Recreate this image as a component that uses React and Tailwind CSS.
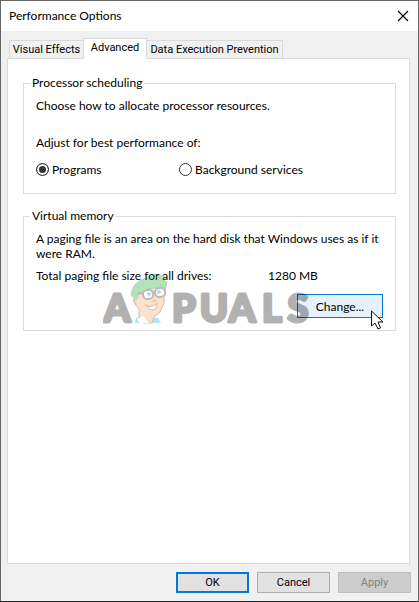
import { useState } from 'react';

const TABS = [
  { name: 'Visual Effects', width: 'w-[75px]' },
  { name: 'Advanced', width: 'w-16' },
  { name: 'Data Execution Prevention', width: 'w-[137px]' },
];

function TitleBar() {
  return (
    <header className="flex h-[30px] items-center justify-between bg-white pl-2 pr-[9px]">
      <h1 className="text-[12px] leading-4">Performance Options</h1>
      <button aria-label="Close" className="flex h-4 w-3 items-center justify-center">
        <svg width="12" height="12" viewBox="0 0 12 12" fill="none" stroke="#000" strokeWidth="1.1">
          <path d="M1 1L11 11M11 1L1 11" />
        </svg>
      </button>
    </header>
  );
}

function Tabs({ active, onSelect }) {
  return (
    <div role="tablist" className="relative z-10 -mb-px flex items-end pl-0.5 font-['Roboto',sans-serif]">
      {TABS.map((tab) => (
        <button
          key={tab.name}
          role="tab"
          aria-selected={active === tab.name}
          onClick={() => onSelect(tab.name)}
          className={`${tab.width} -mr-px flex justify-center whitespace-nowrap border border-[#d9d9d9] text-[11px] leading-4 ${
            active === tab.name ? 'z-10 h-[21px] border-b-0 bg-white pt-px' : 'h-[19px] bg-[#f0f0f0] pt-px'
          }`}
        >
          {tab.name}
        </button>
      ))}
    </div>
  );
}

function Group({ title, children }) {
  return (
    <fieldset className="min-w-0 border border-[#dcdcdc] pl-3 pr-3">
      <legend className="-ml-1.5 px-0.5 text-[12px] leading-4">{title}</legend>
      {children}
    </fieldset>
  );
}

function Radio({ label, checked, onChange }) {
  return (
    <label className="flex items-center gap-[3px]">
      <input
        type="radio"
        name="scheduling"
        checked={checked}
        onChange={onChange}
        className="h-[13px] w-[13px] appearance-none rounded-full border border-[#333] bg-white checked:bg-[#333] checked:shadow-[inset_0_0_0_2px_#fff]"
      />
      {label}
    </label>
  );
}

function Watermark() {
  return (
    <svg
      aria-hidden="true"
      className="pointer-events-none absolute -top-2.5 left-[67px] opacity-30"
      width="210"
      height="64"
      viewBox="0 0 210 64"
    >
      <g
        className="font-['Lato','Open_Sans',sans-serif] text-[38px] font-black"
        stroke="#000"
        strokeWidth="3"
        strokeLinejoin="round"
        textAnchor="middle"
      >
        <text x="14" y="48">A</text>
        <text x="81" y="48">P</text>
        <text x="111" y="48">U</text>
        <text x="139" y="48">A</text>
        <text x="169" y="48">L</text>
        <text x="195" y="48">S</text>
      </g>
      <g strokeLinejoin="round" strokeLinecap="round">
        <path d="M32 49L33 44L38 42L55 44L58 49Z" fill="#1aa5d5" />
        <path d="M35 19L31 26L32 30L36 35L36 43L40 49H49L51 43L57 38L61 29L61 15L50 13Z" fill="#f3a04e" stroke="#50301c" />
        <path d="M29 22C27 15 33 7 43 4L51 1C55 0 60 1 63 4L61 7L64 8L62 16C52 12 43 14 36 20L33 26Z" fill="#06a016" stroke="#145a21" />
        <path d="M34 45L37 49H46L40 42Z" fill="#fff" />
        <g fill="#fff" stroke="#222" strokeWidth="2">
          <rect x="40" y="16" width="10" height="9" rx="4" transform="rotate(-8 45 20)" />
          <rect x="52" y="14" width="10" height="9" rx="4" transform="rotate(-8 57 18)" />
          <path d="M50 19L52 18M40 20L35 19" fill="none" />
        </g>
        <circle cx="46" cy="20" r="2" fill="#1788bc" />
        <circle cx="56" cy="18" r="2" fill="#1788bc" />
        <path d="M43 31C47 34 52 32 54 29C54 35 49 40 43 31Z" fill="#fff" stroke="#3d2716" />
        <path d="M51 25L53 27H50M30 26L33 31" fill="none" stroke="#50301c" />
      </g>
    </svg>
  );
}

function Cursor() {
  return (
    <svg aria-hidden="true" className="absolute left-[74px] top-4" width="13" height="20" viewBox="0 0 13 20">
      <path d="M.5 1V16L4 13L7 19L9.5 18L7 12H12Z" fill="#fff" stroke="#111" />
    </svg>
  );
}

export default function App() {
  const [tab, setTab] = useState('Advanced');
  const [mode, setMode] = useState('Programs');

  return (
    <main className="flex min-h-screen flex-col border border-[#666] border-b-[#222] bg-[#f0f0f0] font-['Lato','Noto_Sans',sans-serif] text-[12px] leading-[15px] text-black">
      <TitleBar />
      <div className="flex grow flex-col pb-[38px] pl-1.5 pr-2 pt-[7px]">
        <Tabs active={tab} onSelect={setTab} />
        <section role="tabpanel" className="flex grow flex-col gap-[14px] border border-[#dcdcdc] bg-white pl-[15px] pr-[13px] pt-4">
          <Group title="Processor scheduling">
            <p className="pt-[7px]">Choose how to allocate processor resources.</p>
            <p className="pt-[22px]">Adjust for best performance of:</p>
            <div className="grid grid-cols-[143px_1fr] pb-4 pt-3">
              <Radio label="Programs" checked={mode === 'Programs'} onChange={() => setMode('Programs')} />
              <Radio label="Background services" checked={mode === 'Background services'} onChange={() => setMode('Background services')} />
            </div>
          </Group>
          <Group title="Virtual memory">
            <p className="pt-[7px]">A paging file is an area on the hard disk that Windows uses as if it were RAM.</p>
            <dl className="flex pt-[7px]">
              <dt className="w-[232px]">Total paging file size for all drives:</dt>
              <dd>1280 MB</dd>
            </dl>
            <div className="relative mt-px flex justify-end pb-3 pt-[10px]">
              <div className="relative">
                <button className="flex h-6 w-[86px] items-center justify-center border border-[#0078d7] bg-[#e5f1fb]">Change...</button>
                <Cursor />
              </div>
              <Watermark />
            </div>
          </Group>
        </section>
      </div>
      <footer className="-mt-[30px] flex justify-end gap-2 pb-2 pr-[7px] font-['Roboto',sans-serif]">
        <button className="h-[21px] w-[73px] border-2 border-[#0078d7] bg-[#e1e1e1] text-[11px] leading-4">OK</button>
        <button className="h-[21px] w-[73px] border border-[#adadad] bg-[#e1e1e1] text-[11px] leading-4">Cancel</button>
        <button disabled className="h-[21px] w-[73px] border border-[#bfbfbf] bg-[#ccc] text-[11px] leading-4 text-[#838383]">Apply</button>
      </footer>
    </main>
  );
}
